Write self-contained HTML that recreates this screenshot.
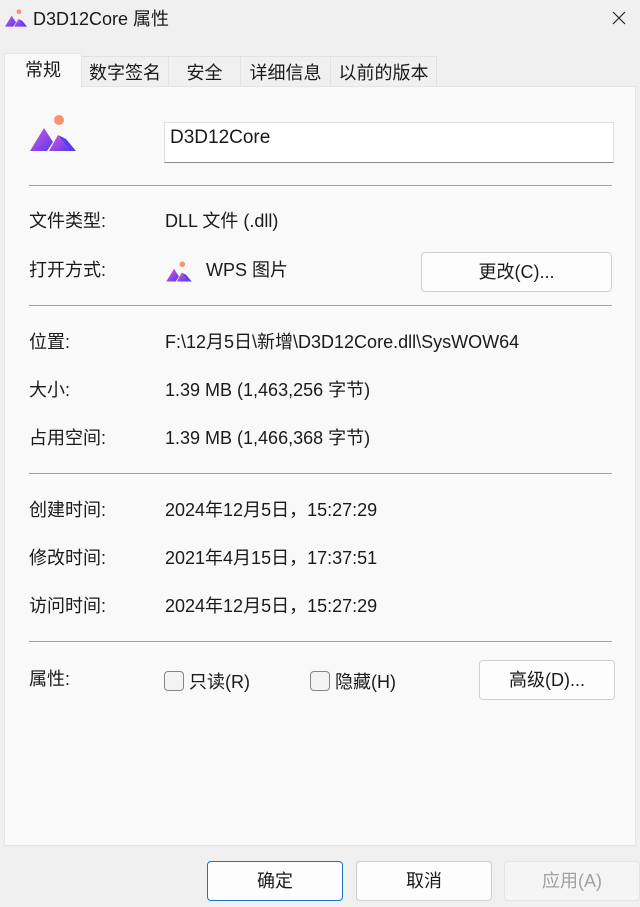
<!DOCTYPE html>
<html><head><meta charset="utf-8"><style>
body{margin:0;width:640px;height:907px;background:#f0f0f0;font-family:"Liberation Sans","Noto Sans CJK SC",sans-serif;color:#1a1a1a;position:relative;overflow:hidden;font-size:18px}
.a{position:absolute;white-space:nowrap;line-height:22px}
.tab{position:absolute;top:56px;height:30px;border:1px solid #e2e2e2;border-bottom:none;background:#f0f0f0;font-size:18px;line-height:32px;text-align:center;box-sizing:border-box}
.panel{position:absolute;left:4px;top:86px;width:632px;height:760px;background:#f9f9f9;border:1px solid #e5e5e5;box-sizing:border-box}
.sep{position:absolute;left:29px;width:583px;height:1px;background:#a0a0a0}
.btn{position:absolute;background:#fdfdfd;border:1px solid #d0d0d0;border-radius:4px;box-sizing:border-box;text-align:center;font-size:18px}
.cb{position:absolute;width:20px;height:20px;border:1px solid #858585;border-radius:4px;background:#f3f3f3;box-sizing:border-box}
</style></head><body>
<svg class="a" style="left:4px;top:8px" width="24" height="20" viewBox="0 0 50 38"><defs><linearGradient id="g2" x1="0" y1="0" x2="1" y2="1"><stop offset="0" stop-color="#e65ad5"/><stop offset="1" stop-color="#4f3af2"/></linearGradient></defs><circle cx="31" cy="6" r="5" fill="#f7946c"/><path d="M2 37 L16 14 L25 28 L19 37 Z" fill="url(#g2)"/><path d="M21 37 L30 21 L42 37 Z" fill="url(#g2)"/><path d="M30 21 L38 25 L48 37 L42 37 Z" fill="#5b3ae8"/></svg>
<div class="a" style="left:33px;top:8px;font-size:18px">D3D12Core 属性</div>
<svg class="a" style="left:612px;top:11px" width="14" height="14"><path d="M1 1L13 13M13 1L1 13" stroke="#222" stroke-width="1.2"/></svg>
<div class="tab" style="left:81px;width:88px">数字签名</div>
<div class="tab" style="left:168px;width:73px">安全</div>
<div class="tab" style="left:240px;width:91px">详细信息</div>
<div class="tab" style="left:330px;width:107px">以前的版本</div>
<div class="panel"></div>
<div class="tab" style="left:4px;top:53px;width:78px;height:35px;background:#f9f9f9;border-color:#e5e5e5">常规</div>
<svg class="a" style="left:28px;top:114px" width="50" height="38" viewBox="0 0 50 38"><circle cx="31" cy="6" r="5" fill="#f7946c"/><path d="M2 37 L16 14 L25 28 L19 37 Z" fill="url(#g2)"/><path d="M21 37 L30 21 L42 37 Z" fill="url(#g2)"/><path d="M30 21 L38 25 L48 37 L42 37 Z" fill="#5b3ae8"/></svg>
<div class="a" style="left:164px;top:122px;width:450px;height:41px;background:#fff;border:1px solid #e0e0e0;border-bottom:1px solid #888;box-sizing:border-box;font-size:19px;line-height:30px;padding-left:5px">D3D12Core</div>
<div class="sep" style="top:185px"></div>
<div class="a" style="left:29px;top:210px">文件类型:</div><div class="a" style="left:165px;top:210px">DLL 文件 (.dll)</div>
<div class="a" style="left:29px;top:259px">打开方式:</div>
<svg class="a" style="left:165px;top:261px" width="28" height="21" viewBox="0 0 50 38"><circle cx="31" cy="6" r="5" fill="#f7946c"/><path d="M2 37 L16 14 L25 28 L19 37 Z" fill="url(#g2)"/><path d="M21 37 L30 21 L42 37 Z" fill="url(#g2)"/><path d="M30 21 L38 25 L48 37 L42 37 Z" fill="#5b3ae8"/></svg>
<div class="a" style="left:206px;top:259px">WPS 图片</div>
<div class="btn" style="left:421px;top:252px;width:191px;height:40px;line-height:38px">更改(C)...</div>
<div class="sep" style="top:305px"></div>
<div class="a" style="left:29px;top:331px">位置:</div><div class="a" style="left:165px;top:331px">F:\12月5日\新增\D3D12Core.dll\SysWOW64</div>
<div class="a" style="left:29px;top:379px">大小:</div><div class="a" style="left:165px;top:379px">1.39 MB (1,463,256 字节)</div>
<div class="a" style="left:29px;top:427px">占用空间:</div><div class="a" style="left:165px;top:427px">1.39 MB (1,466,368 字节)</div>
<div class="sep" style="top:473px"></div>
<div class="a" style="left:29px;top:499px">创建时间:</div><div class="a" style="left:165px;top:499px">2024年12月5日，15:27:29</div>
<div class="a" style="left:29px;top:547px">修改时间:</div><div class="a" style="left:165px;top:547px">2021年4月15日，17:37:51</div>
<div class="a" style="left:29px;top:595px">访问时间:</div><div class="a" style="left:165px;top:595px">2024年12月5日，15:27:29</div>
<div class="sep" style="top:641px"></div>
<div class="a" style="left:29px;top:668px">属性:</div>
<div class="cb" style="left:164px;top:671px"></div><div class="a" style="left:189px;top:671px">只读(R)</div>
<div class="cb" style="left:310px;top:671px"></div><div class="a" style="left:335px;top:671px">隐藏(H)</div>
<div class="btn" style="left:479px;top:660px;width:136px;height:40px;line-height:38px">高级(D)...</div>
<div class="btn" style="left:207px;top:861px;width:136px;height:40px;line-height:38px;border-color:#1a73c8">确定</div>
<div class="btn" style="left:356px;top:861px;width:136px;height:40px;line-height:38px">取消</div>
<div class="btn" style="left:504px;top:861px;width:136px;height:40px;line-height:38px;background:#f5f5f5;border-color:#e5e5e5;color:#a0a0a0">应用(A)</div>
</body></html>
